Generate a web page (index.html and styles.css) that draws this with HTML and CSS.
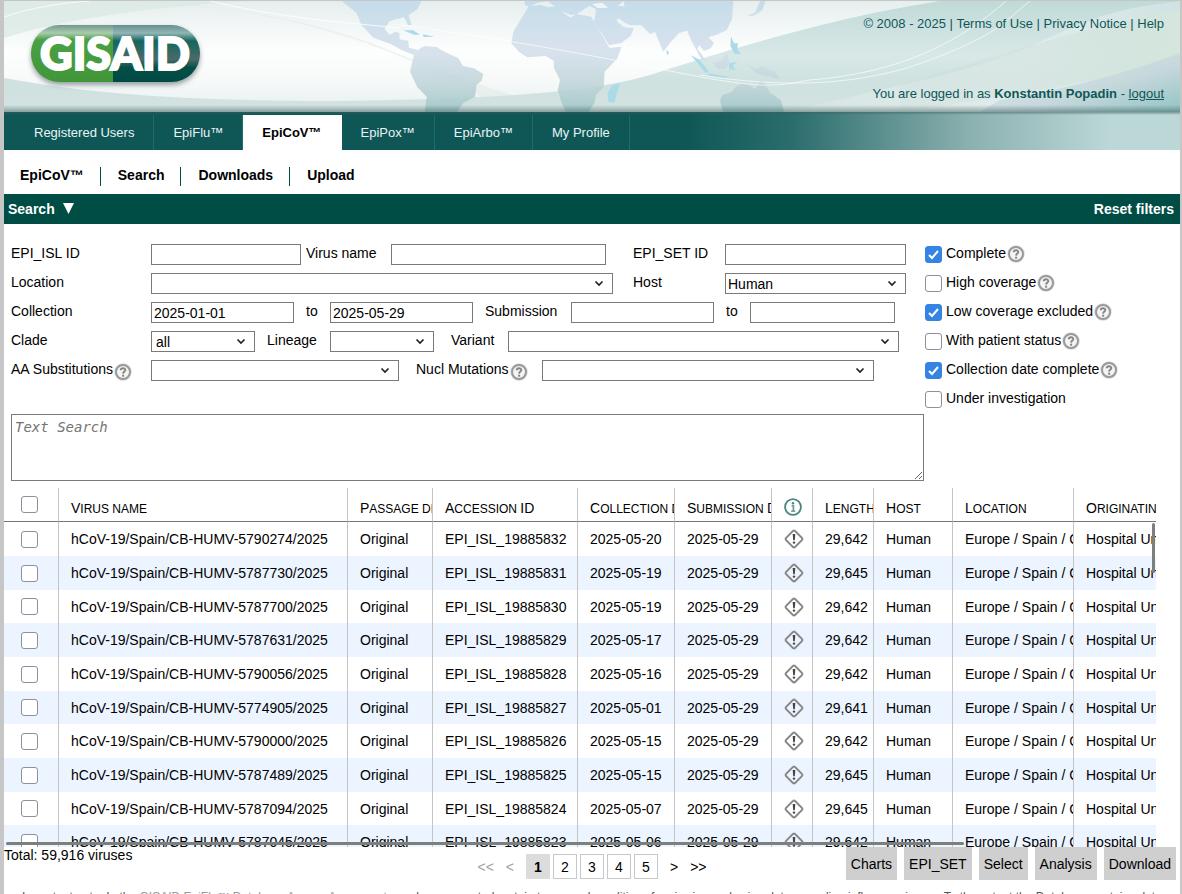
FILE: index.html
```html
<!DOCTYPE html>
<html lang="en">
<head>
<meta charset="utf-8">
<title>GISAID - EpiCoV</title>
<link rel="stylesheet" href="styles.css">
</head>
<body>
<svg class="defs" aria-hidden="true">
  <symbol id="help" viewBox="0 0 18 18">
    <circle cx="9" cy="9" r="7" fill="#f4f4f4" stroke="#d8d8d8" stroke-width="3.4"/>
    <circle cx="9" cy="9" r="7" fill="#f4f4f4" stroke="#9a9a9a" stroke-width="2"/>
    <path d="M6.700 7.300C6.800 4.600 11.400 4.700 11.300 7.200C11.200 8.600 9.200 8.700 9.100 10.600" fill="none" stroke="#858585" stroke-width="1.9"/>
    <rect x="8.100" y="11.700" width="2" height="2" fill="#858585"/>
  </symbol>
  <symbol id="warn" viewBox="0 0 20 20">
    <rect x="3.600" y="3.600" width="12.800" height="12.800" rx="1.800" transform="rotate(45 10 10)" fill="none" stroke="#c4c4c4" stroke-width="2.400"/>
    <rect x="3.600" y="3.600" width="12.800" height="12.800" rx="1.800" transform="rotate(45 10 10)" fill="none" stroke="#7c7c7c" stroke-width="1.300"/>
    <path d="M8.700 5h2.600l-.5 6.200H9.200z" fill="#444"/>
    <circle cx="10" cy="13.600" r="1.200" fill="#444"/>
  </symbol>
  <symbol id="info" viewBox="0 0 18 18">
    <circle cx="9" cy="9" r="7.900" fill="none" stroke="#4a867f" stroke-width="1.800"/>
    <circle cx="9" cy="5.200" r="1.200" fill="#4a867f"/>
    <path d="M7.600 7.900h1.800v5M7.200 13.100h4" fill="none" stroke="#6fa09a" stroke-width="1.800"/>
  </symbol>
</svg>
<div class="page">
  <header class="banner">
    <svg class="banner-art" viewBox="4 1 1176 111" preserveAspectRatio="none" aria-hidden="true">
      <defs>
        <linearGradient id="sky" x1="0" y1="0" x2="0" y2="1"><stop offset="0" stop-color="#e6eeee"/><stop offset=".45" stop-color="#fdfefe"/><stop offset=".7" stop-color="#f8fafa"/><stop offset="1" stop-color="#e6eeee"/></linearGradient>
        <linearGradient id="land" gradientUnits="userSpaceOnUse" x1="0" y1="0" x2="0" y2="335"><stop offset="0" stop-color="#c2dbea"/><stop offset=".45" stop-color="#d5e0ec"/><stop offset=".75" stop-color="#c2d6da"/><stop offset="1" stop-color="#a2c8c8"/></linearGradient>
        <linearGradient id="hill" gradientUnits="userSpaceOnUse" x1="0" y1="0" x2="0" y2="112"><stop offset="0" stop-color="#c0dad8"/><stop offset=".5" stop-color="#d8e8e7"/><stop offset=".7" stop-color="#cfe2e0"/><stop offset="1" stop-color="#d2e2e0"/></linearGradient>
        <linearGradient id="shade" x1="0" y1="0" x2="0" y2="1"><stop offset="0" stop-color="#3c5c5c" stop-opacity="0"/><stop offset="1" stop-color="#3c5c5c" stop-opacity=".5"/></linearGradient>
        <linearGradient id="sweep" x1="0" y1="0" x2="1" y2="0"><stop offset="0" stop-color="#e6f0f0" stop-opacity=".2"/><stop offset=".6" stop-color="#e8f0f0" stop-opacity=".7"/><stop offset="1" stop-color="#d0e2e2"/></linearGradient>
        <linearGradient id="mint" x1="0" y1="0" x2="1" y2="0"><stop offset="0" stop-color="#c5d8d5" stop-opacity=".2"/><stop offset="1" stop-color="#d5e7dc"/></linearGradient>
        <linearGradient id="corner" x1="0" y1="0" x2="1" y2="1"><stop offset="0" stop-color="#d6e2e4" stop-opacity=".2"/><stop offset=".6" stop-color="#c6d8dc"/><stop offset="1" stop-color="#93c3c4"/></linearGradient>
      </defs>
      <rect x="4" y="1" width="1176" height="111" fill="url(#sky)"/>
      <path d="M4 1H250C140 8 60 20 4 38Z" fill="#d9e8e2" opacity=".7"/>
      <path d="M140 1C250 8 330 25 394 52S500 90 560 111H505C440 70 350 25 215 8Z" fill="#dfe9e3" opacity=".5"/>
      <path d="M4 78C90 94 190 101 330 101C480 100 590 93 650 75C735 48 830 18 940 1H1180V112H4Z" fill="url(#hill)"/>
      <g transform="translate(394 0) scale(.33333)">
        <g fill="url(#land)" opacity=".9">
          <path d="M-157 3H82L70 28 44 45 53 75 42 76 30 52 5 58-15 65-28 88-12 105 2 95 16 98 17 118 43 122 45 143 72 149 62 166 22 150-10 132-62 113-98 75-112 40-130 25Z"/>
          <path d="M60 165 75 147 92 138 127 141 147 153 193 175 207 198 240 205 268 222 263 242 248 254 243 290 207 310 190 335H92L98 290 70 262 48 215Z"/>
          <path d="M405 18 440 15 465 22 494 17 508 38 530 53 546 42 592 50 606 75 628 112 646 143 683 140 669 177 632 215 629 262 606 284 602 307 585 335H515L502 305 491 270 498 240 480 205 479 182 455 168 400 172 375 156 352 130 358 95 377 64Z"/>
          <path d="M392 3H1018L1014 58 998 91 964 106 943 112 960 129 950 145 930 153 916 136 910 146 925 166 935 185 922 178 892 122 880 92 855 99 827 130 808 156 783 96 768 102 742 76 708 76 690 67 673 55 668 62 690 82 720 84 710 108 682 129 645 136 623 100 600 66 606 28 586 18 547 43 530 45 509 36 486 20 460 4 430 8 406 20 392 15Z"/>
          <path d="M957 190 983 180 999 160 1006 190 993 208 969 205ZM1060 193 1085 207 1106 199 1143 215 1155 238 1130 231 1085 220ZM978 303 984 286 1015 275 1025 260 1043 249 1063 252 1083 268 1101 241 1117 258 1129 279 1161 301 1170 335H987ZM1060 47 1083 38 1098 3 1115 3 1105 31 1078 47Z"/>
        </g>
        <path d="M595 12 625 8 643 24H610ZM668 56 704 77 691 80 674 68ZM672 18 688 4 692 19Z" fill="#eef4f6"/>
        <path d="M643 305 641 278 653 257 678 249 670 276 661 309ZM891 166 917 179 945 216 934 218ZM942 220 1002 230 998 235 944 227ZM1005 190 1032 185 1016 195 1026 214 1011 205 1007 218ZM1011 109 1020 130 1032 130 1030 147 1041 163 1022 161 1009 138ZM817 149 825 157 820 167ZM28 91 58 91 78 104 60 104ZM87 103 122 110 88 111Z" fill="#acdbe8"/>
      </g>
      <path d="M788 112C870 90 970 75 1040 42S1130 8 1180 1V112Z" fill="url(#sweep)"/>
      <path d="M900 85C1000 55 1090 25 1180 10V60C1080 85 990 100 900 111Z" fill="url(#mint)" opacity=".8"/>
      <path d="M1000 100C1070 88 1120 75 1180 53V112H980Z" fill="url(#corner)"/>
      <path d="M394 24C500 38 590 55 680 73S780 85 810 80C900 73 960 42 1006 1M700 75C780 88 860 87 930 60S1000 25 1030 1" fill="none" stroke="#fff" stroke-width="1" opacity=".65"/>
      <path d="M4 17C30 8 60 3 90 1M210 1C280 18 340 22 400 28" fill="none" stroke="#fff" stroke-width="1" opacity=".8"/>
      <rect x="4" y="105" width="1176" height="7" fill="url(#shade)"/>
    </svg>
    <a class="logo" href="#" aria-label="GISAID">
      <svg width="184" height="76" viewBox="0 0 184 76">
        <defs>
          <linearGradient id="gl" x1="0" y1="0" x2="0" y2="1"><stop offset="0" stop-color="#72998c"/><stop offset=".14" stop-color="#a9ccae"/><stop offset=".26" stop-color="#4aa044"/><stop offset="1" stop-color="#42963a"/></linearGradient>
          <linearGradient id="gr" x1="0" y1="0" x2="0" y2="1"><stop offset="0" stop-color="#668f92"/><stop offset=".14" stop-color="#92b5b5"/><stop offset=".28" stop-color="#146660"/><stop offset=".6" stop-color="#496b69"/><stop offset=".75" stop-color="#044e47"/><stop offset="1" stop-color="#014b44"/></linearGradient>
          <filter id="soft" x="-10%" y="-20%" width="120%" height="150%"><feGaussianBlur stdDeviation="2.5"/></filter>
        </defs>
        <rect x="7" y="10" width="169" height="57" rx="28" fill="#566" opacity=".6" filter="url(#soft)"/>
        <path d="M89 7H35.500a28.500 28.500 0 0 0 0 57H89Z" fill="url(#gl)"/>
        <path d="M89 7H147.500a28.500 28.500 0 0 1 0 57H89Z" fill="url(#gr)"/>
        <text class="logo-text" x="91" y="52" text-anchor="middle">GISAID</text>
      </svg>
    </a>
    <div class="banner-info">
      <div>© 2008 - 2025 | <a href="#">Terms of Use</a> | <a href="#">Privacy Notice</a> | <a href="#">Help</a></div>
      <div>You are logged in as <b>Konstantin Popadin</b> - <a class="logout" href="#">logout</a></div>
    </div>
  </header>

  <nav class="tabs" aria-label="Databases">
    <a href="#">Registered Users</a>
    <a href="#">EpiFlu™</a>
    <a class="active" href="#">EpiCoV™</a>
    <a href="#">EpiPox™</a>
    <a href="#">EpiArbo™</a>
    <a href="#">My Profile</a>
  </nav>
  <nav class="subnav" aria-label="EpiCoV">
    <a href="#">EpiCoV™</a>
    <a href="#">Search</a>
    <a href="#">Downloads</a>
    <a href="#">Upload</a>
  </nav>

  <div class="searchbar">
    <button type="button">Search <svg width="11" height="11" viewBox="0 0 11 11" aria-hidden="true"><path d="M0 0h11L5.500 11z" fill="#fff"/></svg></button>
    <button type="button">Reset filters</button>
  </div>

  <form class="filters">
    <div class="fields">
      <div class="row">
        <label class="first" for="isl">EPI_ISL ID</label><input class="w150" id="isl" type="text">
        <label class="vname" for="vname">Virus name</label><input class="w215" id="vname" type="text">
        <label class="set" for="set">EPI_SET ID</label><input class="grow" id="set" type="text">
      </div>
      <div class="row">
        <label class="first" for="loc">Location</label><select class="w462" id="loc"><option></option></select>
        <label class="host" for="host">Host</label><select class="grow flush" id="host"><option>Human</option></select>
      </div>
      <div class="row end-dates">
        <label class="first" for="cfrom">Collection</label><input class="w143" id="cfrom" type="text" value="2025-01-01">
        <label class="to" for="cto">to</label><input class="w143" id="cto" type="text" value="2025-05-29">
        <label class="subm" for="sfrom">Submission</label><input class="w143" id="sfrom" type="text">
        <label class="to" for="sto">to</label><input class="grow" id="sto" type="text">
      </div>
      <div class="row end-clade">
        <label class="first" for="clade">Clade</label><select class="w104" id="clade"><option>all</option></select>
        <label class="lineage" for="lineage">Lineage</label><select class="w104" id="lineage"><option></option></select>
        <label class="variant" for="variant">Variant</label><select class="grow" id="variant"><option></option></select>
      </div>
      <div class="row end-mut">
        <label class="first" for="aa">AA Substitutions<svg class="help"><use href="#help"/></svg></label><select class="w248" id="aa"><option></option></select>
        <label class="nucl" for="nucl">Nucl Mutations<svg class="help"><use href="#help"/></svg></label><select class="grow" id="nucl"><option></option></select>
      </div>
    </div>
    <div class="checks">
      <label><input type="checkbox" checked>Complete<svg class="help"><use href="#help"/></svg></label>
      <label><input type="checkbox">High coverage<svg class="help"><use href="#help"/></svg></label>
      <label><input type="checkbox" checked>Low coverage excluded<svg class="help"><use href="#help"/></svg></label>
      <label><input type="checkbox">With patient status<svg class="help"><use href="#help"/></svg></label>
      <label><input type="checkbox" checked>Collection date complete<svg class="help"><use href="#help"/></svg></label>
      <label><input type="checkbox">Under investigation</label>
    </div>
    <textarea class="text-search" placeholder="Text Search" aria-label="Text Search"></textarea>
  </form>

  <div class="results">
    <table>
      <colgroup><col class="c-check"><col class="c-name"><col class="c-passage"><col class="c-acc"><col class="c-date"><col class="c-date"><col class="c-icon"><col class="c-len"><col class="c-host"><col class="c-loc"><col class="c-lab"></colgroup>
      <thead>
        <tr><th><input type="checkbox" aria-label="Select all"></th><th><div>Virus name</div></th><th><div>Passage details</div></th><th><div>Accession <span>ID</span></div></th><th><div>Collection date</div></th><th><div>Submission <span>D</span>ate</div></th><th><svg class="info" role="img" aria-label="Information"><use href="#info"/></svg></th><th><div>Length</div></th><th><div>Host</div></th><th><div>Location</div></th><th><div>Originating lab</div></th></tr>
      </thead>
      <tbody>
        <tr><td><input type="checkbox" aria-label="Select row"></td><td>hCoV-19/Spain/CB-HUMV-5790274/2025</td><td>Original</td><td>EPI_ISL_19885832</td><td>2025-05-20</td><td>2025-05-29</td><td><svg class="warn"><use href="#warn"/></svg></td><td>29,642</td><td>Human</td><td>Europe / Spain / Cantabria</td><td>Hospital Universitario</td></tr>
        <tr><td><input type="checkbox" aria-label="Select row"></td><td>hCoV-19/Spain/CB-HUMV-5787730/2025</td><td>Original</td><td>EPI_ISL_19885831</td><td>2025-05-19</td><td>2025-05-29</td><td><svg class="warn"><use href="#warn"/></svg></td><td>29,645</td><td>Human</td><td>Europe / Spain / Cantabria</td><td>Hospital Universitario</td></tr>
        <tr><td><input type="checkbox" aria-label="Select row"></td><td>hCoV-19/Spain/CB-HUMV-5787700/2025</td><td>Original</td><td>EPI_ISL_19885830</td><td>2025-05-19</td><td>2025-05-29</td><td><svg class="warn"><use href="#warn"/></svg></td><td>29,642</td><td>Human</td><td>Europe / Spain / Cantabria</td><td>Hospital Universitario</td></tr>
        <tr><td><input type="checkbox" aria-label="Select row"></td><td>hCoV-19/Spain/CB-HUMV-5787631/2025</td><td>Original</td><td>EPI_ISL_19885829</td><td>2025-05-17</td><td>2025-05-29</td><td><svg class="warn"><use href="#warn"/></svg></td><td>29,642</td><td>Human</td><td>Europe / Spain / Cantabria</td><td>Hospital Universitario</td></tr>
        <tr><td><input type="checkbox" aria-label="Select row"></td><td>hCoV-19/Spain/CB-HUMV-5790056/2025</td><td>Original</td><td>EPI_ISL_19885828</td><td>2025-05-16</td><td>2025-05-29</td><td><svg class="warn"><use href="#warn"/></svg></td><td>29,642</td><td>Human</td><td>Europe / Spain / Cantabria</td><td>Hospital Universitario</td></tr>
        <tr><td><input type="checkbox" aria-label="Select row"></td><td>hCoV-19/Spain/CB-HUMV-5774905/2025</td><td>Original</td><td>EPI_ISL_19885827</td><td>2025-05-01</td><td>2025-05-29</td><td><svg class="warn"><use href="#warn"/></svg></td><td>29,641</td><td>Human</td><td>Europe / Spain / Cantabria</td><td>Hospital Universitario</td></tr>
        <tr><td><input type="checkbox" aria-label="Select row"></td><td>hCoV-19/Spain/CB-HUMV-5790000/2025</td><td>Original</td><td>EPI_ISL_19885826</td><td>2025-05-15</td><td>2025-05-29</td><td><svg class="warn"><use href="#warn"/></svg></td><td>29,642</td><td>Human</td><td>Europe / Spain / Cantabria</td><td>Hospital Universitario</td></tr>
        <tr><td><input type="checkbox" aria-label="Select row"></td><td>hCoV-19/Spain/CB-HUMV-5787489/2025</td><td>Original</td><td>EPI_ISL_19885825</td><td>2025-05-15</td><td>2025-05-29</td><td><svg class="warn"><use href="#warn"/></svg></td><td>29,645</td><td>Human</td><td>Europe / Spain / Cantabria</td><td>Hospital Universitario</td></tr>
        <tr><td><input type="checkbox" aria-label="Select row"></td><td>hCoV-19/Spain/CB-HUMV-5787094/2025</td><td>Original</td><td>EPI_ISL_19885824</td><td>2025-05-07</td><td>2025-05-29</td><td><svg class="warn"><use href="#warn"/></svg></td><td>29,645</td><td>Human</td><td>Europe / Spain / Cantabria</td><td>Hospital Universitario</td></tr>
        <tr><td><input type="checkbox" aria-label="Select row"></td><td>hCoV-19/Spain/CB-HUMV-5787045/2025</td><td>Original</td><td>EPI_ISL_19885823</td><td>2025-05-06</td><td>2025-05-29</td><td><svg class="warn"><use href="#warn"/></svg></td><td>29,642</td><td>Human</td><td>Europe / Spain / Cantabria</td><td>Hospital Universitario</td></tr>
      </tbody>
    </table>
    <div class="thumb-v"></div>
    <div class="thumb-h"></div>
  </div>

  <div class="actions">
    <div class="total">Total: 59,916 viruses</div>
    <nav class="pager" aria-label="Pages">
      <a class="off" href="#">&lt;&lt;</a><a class="off" href="#">&lt;</a>
      <div class="pages"><a class="num current" href="#">1</a><a class="num" href="#">2</a><a class="num" href="#">3</a><a class="num" href="#">4</a><a class="num" href="#">5</a></div>
      <a href="#">&gt;</a><a href="#">&gt;&gt;</a>
    </nav>
    <div class="buttons">
      <button type="button">Charts</button><button type="button">EPI_SET</button><button type="button">Select</button><button type="button">Analysis</button><button type="button">Download</button>
    </div>
  </div>
  <footer class="note">Important note: In the <a href="#">GISAID EpiFlu™ Database Access Agreement</a>, you have accepted certain terms and conditions for viewing and using data regarding influenza viruses. To the extent the Database contains data</footer>
</div>
</body>
</html>
```

FILE: styles.css
```css
* { box-sizing: border-box; }

body {
  margin: 0;
  height: 100vh;
  overflow: hidden;
  padding: 1px 2px 0 4px;
  background: #c6c6c6;
  font: 14px/16px "Liberation Sans", Arial, sans-serif;
  color: #000;
}

a { color: inherit; text-decoration: none; }
button, input, select { font: inherit; color: inherit; }
button { border: 0; padding: 0; background: none; }
.defs { position: absolute; width: 0; height: 0; }
.page { background: #fff; min-height: 100vh; }

/* Banner */
.banner {
  position: relative;
  display: flex;
  justify-content: space-between;
  height: 111px;
  color: #0f5757;
  font-size: 13px;
}
.banner-art { position: absolute; inset: 0; width: 100%; height: 100%; }
.logo { position: relative; padding: 17px 0 0 20px; }
.logo svg { display: block; }
.logo-text { font: 900 45px Lato, sans-serif; fill: #fff; stroke: #fff; stroke-width: 2px; }
.banner-info {
  position: relative;
  display: flex;
  flex-direction: column;
  justify-content: space-between;
  padding: 15px 16px 10px 0;
  text-align: right;
}
.logout { text-decoration: underline; }

/* Navigation */
.tabs {
  display: flex;
  padding: 3px 0 0 11px;
  background: linear-gradient(#3c5c5c88, #3c5c5c00 3px), linear-gradient(90deg, #0f5757 58%, #2b6d6d 67%, #8ab0af 82%, #bcd7d7 94%);
  font-size: 13px;
}
.tabs a {
  padding: 10px 19px 9px;
  border-right: 1px solid #17706c;
  color: #e8f4f4;
}
.tabs .active { background: #fff; border-color: #fff; color: #000; font-weight: bold; }
.subnav { display: flex; height: 44px; padding: 17px 0 8px; font-weight: bold; }
.subnav a { padding: 0 16px 0 17px; border-left: 1px solid #004d45; }
.subnav a:first-child { padding-left: 16px; border-left: 0; }

.searchbar {
  display: flex;
  justify-content: space-between;
  height: 30px;
  padding: 0 6px 0 4px;
  background: #004d45;
}
.searchbar button { color: #fff; font-weight: bold; }
.searchbar svg { margin-left: 4px; }

/* Filters */
.filters {
  display: grid;
  grid-template-columns: minmax(0, 1fr) 255px;
  padding: 20px 0 7px 7px;
}
.fields, .checks { display: flex; flex-direction: column; gap: 8px; }
.row { display: flex; align-items: center; padding-right: 19px; }
.end-dates { padding-right: 30px; }
.end-clade { padding-right: 26px; }
.end-mut { padding-right: 51px; }
.row label { display: flex; align-items: center; flex: none; padding-bottom: 3px; }
.row .first { width: 140px; }
.vname { width: 90px; padding-left: 5px; }
.set { width: 119px; padding-left: 27px; }
.host { width: 112px; padding-left: 20px; }
.to { width: 36px; padding-left: 12px; }
.subm { width: 98px; padding-left: 12px; }
.lineage { width: 75px; padding-left: 12px; }
.variant { width: 74px; padding-left: 17px; }
.nucl { width: 143px; padding-left: 17px; }
.row input, .row select {
  height: 21px;
  padding: 0 2px;
  border: 1px solid #7a7a7a;
  border-radius: 0;
  background: #fff;
}
.row select {
  appearance: none;
  padding-left: 4px;
  background: url("data:image/svg+xml,%3Csvg xmlns='http://www.w3.org/2000/svg' width='10' height='7'%3E%3Cpath d='M1.500 1.500L5 5l3.500-3.500' fill='none' stroke='%23222' stroke-width='1.700'/%3E%3C/svg%3E") no-repeat right 8px center;
}
.row .flush { padding-left: 2px; }
.w104 { width: 104px; }
.w143 { width: 143px; }
.w150 { width: 150px; }
.w215 { width: 215px; }
.w248 { width: 248px; }
.w462 { width: 462px; }
.grow { flex: 1; min-width: 0; }
.help { width: 18px; height: 18px; margin: 2px 0 0 1px; }
.row .help { margin-bottom: -3px; }

.checks label { display: flex; align-items: center; height: 21px; padding-bottom: 3px; }
input[type="checkbox"] {
  appearance: none;
  display: block;
  flex: none;
  width: 17px;
  height: 17px;
  margin: 0;
  border: 1px solid #8f8f9d;
  border-radius: 3px;
  background: #fff;
}
.checks input[type="checkbox"] { margin: 2px 4px 0 0; }
input[type="checkbox"]:checked {
  border-color: #3584e4;
  background: #3584e4 url("data:image/svg+xml,%3Csvg xmlns='http://www.w3.org/2000/svg' width='15' height='15'%3E%3Cpath d='M3 8l3 3 6-7' fill='none' stroke='white' stroke-width='2'/%3E%3C/svg%3E") center no-repeat;
}
.text-search {
  grid-row: 1 / span 2;
  grid-column: 1;
  align-self: end;
  height: 67px;
  margin-right: 1px;
  padding: 4px 3px;
  border: 1px solid #7a7a7a;
  font: 14px/17px "DejaVu Sans Mono", monospace;
}
.text-search::placeholder { color: #757575; font-style: italic; }
.fields { grid-row: 1; grid-column: 1; }
.checks { grid-row: 1; grid-column: 2; padding-bottom: 71px; }

/* Results */
.results { position: relative; height: 359px; margin-right: 24px; overflow: hidden; }
table { table-layout: fixed; width: 1270px; border-collapse: separate; border-spacing: 0; }
.c-check { width: 55px; }
.c-name { width: 289px; }
.c-passage { width: 85px; }
.c-acc { width: 145px; }
.c-date { width: 97px; }
.c-icon { width: 41px; }
.c-len { width: 61px; }
.c-host { width: 79px; }
.c-loc { width: 121px; }
.c-lab { width: 200px; }
th, td {
  height: 34px;
  padding: 0 0 0 12px;
  border-right: 1px solid #c4c4c4;
  overflow: hidden;
  white-space: nowrap;
  text-align: left;
}
th:first-child, td:first-child { padding-left: 17px; }
th { border-bottom: 1px solid #777; font-weight: normal; }
th div { padding-top: 7px; font-size: 12px; text-transform: uppercase; }
th div::first-letter, th span { font-size: 14px; }
tbody tr:nth-child(even) { background: #ebf4ff; }
tbody tr:nth-child(3n) td { height: 33px; }
.warn { display: block; width: 20px; height: 20px; }
.info { display: block; width: 18px; height: 18px; margin-top: 4px; }
.thumb-v { position: absolute; top: 35px; right: 1px; width: 3px; height: 50px; border-radius: 2px; background: #7c7f7f; }
.thumb-h { position: absolute; bottom: 2px; left: 2px; right: 192px; height: 3px; border-radius: 2px; background: #7c807c; }

/* Actions */
.actions {
  display: grid;
  grid-template-columns: 1fr auto 1fr;
  height: 40px;
}
.pager { display: flex; align-items: center; gap: 12px; height: 25px; margin-top: 7px; }
.pages { display: flex; gap: 3px; }
.num { width: 24px; padding: 4px 0 3px; border: 1px solid #c8c8c8; text-align: center; }
.current { background: #dcdcdc; border-color: #dcdcdc; font-weight: bold; }
.off { color: #a0a0a0; }
.buttons { display: flex; justify-content: flex-end; gap: 7px; height: 33px; padding-right: 4px; }
.buttons button { padding: 0 5px; background: #cfcfcf; }
.note { padding: 2px 16px; font-size: 12px; text-align: center; white-space: nowrap; color: #555; }
.note a { color: #999; }
```
